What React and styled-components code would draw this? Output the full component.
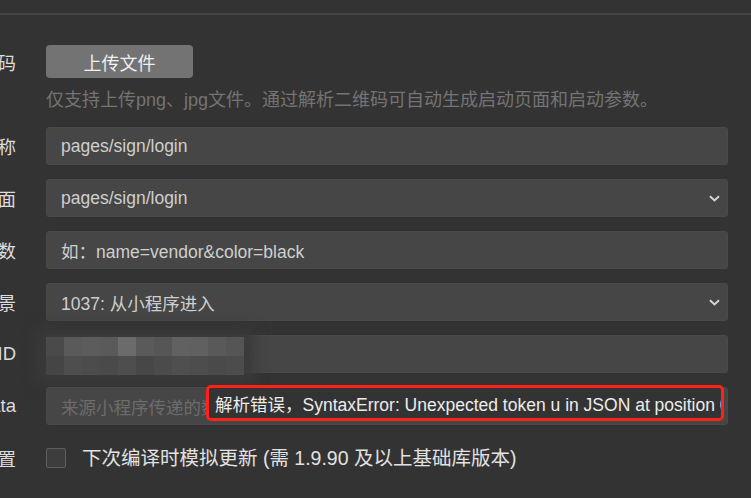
import React from "react";
import styled, { createGlobalStyle } from "styled-components";

const Global = createGlobalStyle`
  html, body { margin: 0; padding: 0; background: #333333; overflow: hidden; }
  body { font-family: "Liberation Sans", "Noto Sans CJK SC", sans-serif; font-size: 17.5px; }
  #root { width: 751px; height: 498px; overflow: hidden; }
`;

const Page = styled.div`
  width: 751px;
  height: 498px;
  overflow: hidden;
  background: #333333;
`;

const TopBar = styled.div`
  height: 13px;
  border-bottom: 2px solid #464646;
`;

const Form = styled.div`
  display: grid;
  grid-template-columns: 100px 1fr;
  column-gap: 30px;
  margin-left: -84px;
  margin-right: 23px;
  padding-top: 30px;
  align-items: center;
`;

const Label = styled.div`
  text-align: right;
  color: #dcdcdc;
  font-size: 18.5px;
  white-space: nowrap;
  margin-top: ${(p) => p.$mt || 0}px;
`;

const Field = styled.div`
  position: relative;
  margin-top: ${(p) => p.$mt || 0}px;
  min-width: 0;
`;

const UploadButton = styled.button`
  width: 147px;
  height: 33px;
  border: none;
  border-radius: 4px;
  background: #737373;
  color: #f0f0f0;
  font: inherit;
  font-size: 18px;
  padding: 0;
  display: flex;
  align-items: center;
  justify-content: center;
`;

const Hint = styled.div`
  color: #747474;
  font-size: 18px;
  line-height: 22px;
  white-space: nowrap;
`;

const Box = styled.div`
  height: 38px;
  box-sizing: border-box;
  background: #464646;
  border: 1px solid #4a4a4a;
  border-radius: 3px;
  display: flex;
  align-items: center;
  padding: 0 7px 0 14px;
  color: ${(p) => (p.$placeholder ? "#6c6c6c" : "#cfcfcf")};
  white-space: nowrap;
  overflow: hidden;
`;

const BoxText = styled.span`
  flex: 1;
  overflow: hidden;
`;

const Chevron = () => (
  <svg width="11" height="7" viewBox="0 0 11 7" style={{ flex: "none" }}>
    <path d="M1 1.2 L5.5 5.4 L10 1.2" fill="none" stroke="#d6d6d6" strokeWidth="2" />
  </svg>
);

const Mosaic = styled.div`
  position: absolute;
  left: 0;
  top: 2px;
  display: grid;
  grid-template-columns: repeat(11, 18px);
  grid-auto-rows: 19px;
  box-shadow: 0 0 14px 10px #3a3a3a;
  border-radius: 2px;
`;

const Tile = styled.div`
  background: ${(p) => p.$c};
`;

const ErrorTip = styled.div`
  position: absolute;
  left: 160px;
  right: 4px;
  top: -2px;
  height: 36px;
  box-sizing: border-box;
  border: 3px solid #ff2219;
  border-radius: 5px;
  background: #333333;
  color: #ececec;
  display: flex;
  align-items: center;
  padding-left: 6px;
  white-space: nowrap;
  overflow: hidden;
`;

const CheckRow = styled.label`
  display: flex;
  align-items: center;
  gap: 16px;
  color: #e2e2e2;
  font-size: 19.5px;
  line-height: 24px;
  white-space: nowrap;
`;

const CheckBox = styled.span`
  width: 20px;
  height: 20px;
  box-sizing: border-box;
  border: 1px solid #5e5e5e;
  background: #3d3d3d;
  border-radius: 2px;
  flex: none;
`;

const row1 = ["#4a4a4a", "#5a5a5a", "#5c5c5c", "#5a5a5a", "#6b6b6b", "#5a5a5a", "#565656", "#616161", "#606060", "#595959", "#555555"];
const row2 = ["#454545", "#4e4e4e", "#4c4c4c", "#4a4a4a", "#4e4e4e", "#474747", "#4b4b4b", "#4f4f4f", "#4d4d4d", "#4a4a4a", "#4c4c4c"];

export default function App() {
  return (
    <Page>
      <Global />
      <TopBar />
      <Form>
        <Label>二维码</Label>
        <Field>
          <UploadButton>上传文件</UploadButton>
        </Field>

        <Label />
        <Field $mt={11}>
          <Hint>仅支持上传png、jpg文件。通过解析二维码可自动生成启动页面和启动参数。</Hint>
        </Field>

        <Label $mt={16}>模式名称</Label>
        <Field $mt={16}>
          <Box><BoxText>pages/sign/login</BoxText></Box>
        </Field>

        <Label $mt={14}>启动页面</Label>
        <Field $mt={14}>
          <Box><BoxText>pages/sign/login</BoxText><Chevron /></Box>
        </Field>

        <Label $mt={14}>启动参数</Label>
        <Field $mt={14}>
          <Box><BoxText>如：name=vendor&amp;color=black</BoxText></Box>
        </Field>

        <Label $mt={14}>进入场景</Label>
        <Field $mt={14}>
          <Box><BoxText>1037: 从小程序进入</BoxText><Chevron /></Box>
        </Field>

        <Label $mt={14}>AppID</Label>
        <Field $mt={14}>
          <Box />
          <Mosaic>
            {row1.concat(row2).map((c, i) => (
              <Tile key={i} $c={c} />
            ))}
          </Mosaic>
        </Field>

        <Label $mt={14}>extraData</Label>
        <Field $mt={14}>
          <Box $placeholder><BoxText>来源小程序传递的数据，JSON格式</BoxText></Box>
          <ErrorTip>解析错误，SyntaxError: Unexpected token u in JSON at position 0</ErrorTip>
        </Field>

        <Label $mt={20}>编译设置</Label>
        <Field $mt={20}>
          <CheckRow>
            <CheckBox />
            下次编译时模拟更新 (需 1.9.90 及以上基础库版本)
          </CheckRow>
        </Field>
      </Form>
    </Page>
  );
}
